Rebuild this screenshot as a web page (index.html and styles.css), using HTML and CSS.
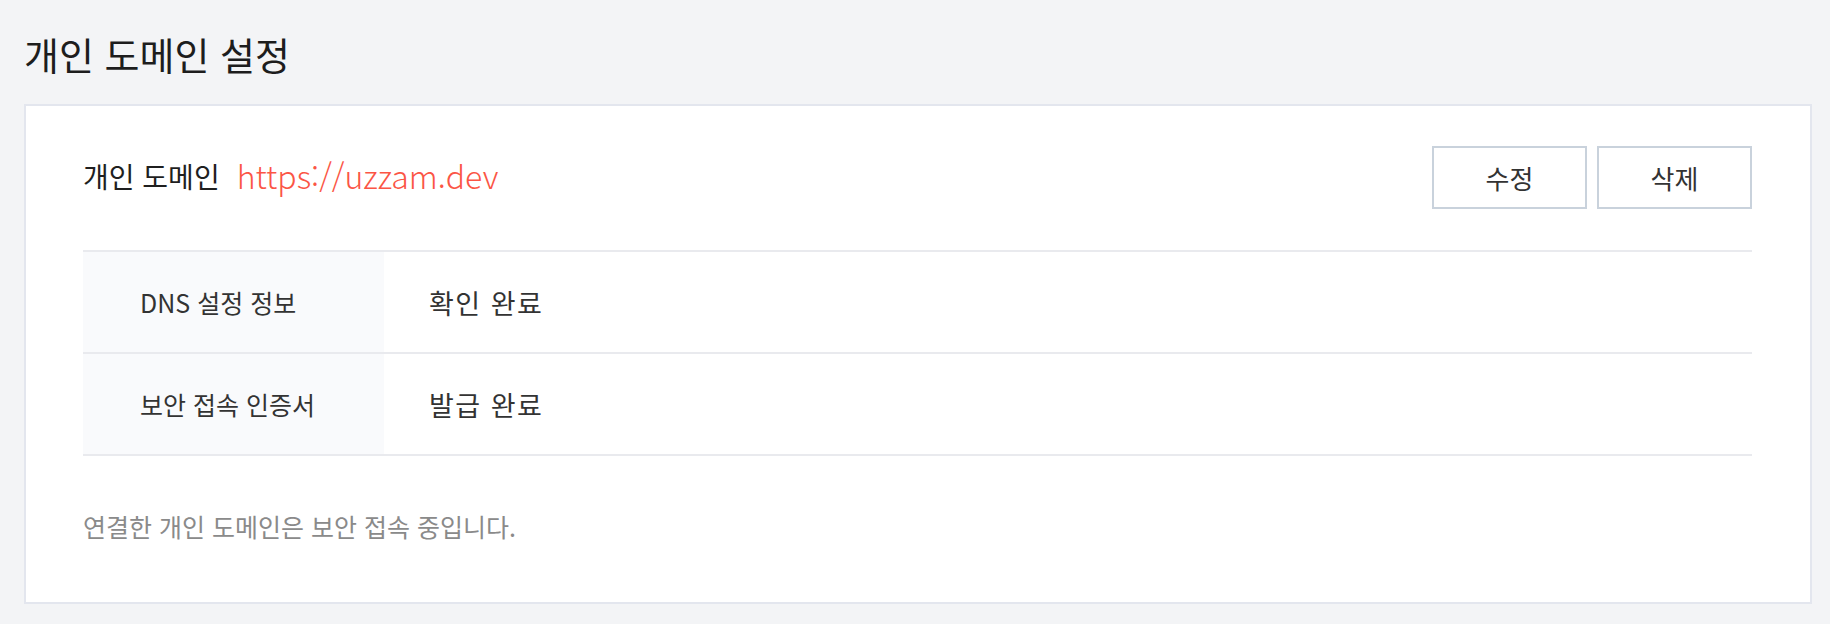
FILE: index.html
```html
<!DOCTYPE html>
<html lang="ko">
<head>
<meta charset="utf-8">
<title>개인 도메인 설정</title>
<link rel="stylesheet" href="styles.css">
</head>
<body>
<main class="page">
  <h1 class="title">개인 도메인 설정</h1>
  <section class="card">
    <div class="domain-row">
      <div class="domain-info">
        <span class="domain-label">개인 도메인</span>
        <a class="domain-url" href="#">https://uzzam.dev</a>
      </div>
      <div class="actions">
        <button class="btn" type="button">수정</button>
        <button class="btn" type="button">삭제</button>
      </div>
    </div>
    <div class="info-table">
      <div class="info-row">
        <div class="info-head">DNS 설정 정보</div>
        <div class="info-value">확인 완료</div>
      </div>
      <div class="info-row">
        <div class="info-head">보안 접속 인증서</div>
        <div class="info-value">발급 완료</div>
      </div>
    </div>
    <p class="notice">연결한 개인 도메인은 보안 접속 중입니다.</p>
  </section>
</main>
</body>
</html>
```

FILE: styles.css
```css
* { box-sizing: border-box; }
html, body { margin: 0; padding: 0; }
body {
  background: #f3f4f6;
  font-family: "Noto Sans CJK KR", "Noto Sans", sans-serif;
  color: #222;
}
.page {
  padding: 0 18px 0 24px;
}
.title {
  margin: 0;
  padding-top: 28px;
  height: 104px;
  font-size: 38px;
  font-weight: 400;
  line-height: 52px;
  color: #1d1d1d;
}
.card {
  background: #fff;
  border: 2px solid #e3e6ee;
  padding: 40px 58px 60px 57px;
}
.domain-row {
  display: flex;
  align-items: center;
  justify-content: space-between;
  height: 63px;
}
.domain-info {
  display: flex;
  align-items: center;
  gap: 17px;
  margin-top: -4px;
}
.domain-label {
  font-size: 28px;
  line-height: 40px;
  color: #1f1f1f;
}
.domain-url {
  font-size: 32px;
  font-weight: 300;
  line-height: 40px;
  color: #fb5545;
  text-decoration: none;
  margin-top: -2px;
}
.actions {
  display: flex;
  gap: 10px;
}
.btn {
  width: 155px;
  height: 63px;
  background: #fff;
  border: 2px solid #c9d2dc;
  font-family: inherit;
  font-size: 26px;
  color: #333;
  padding: 0;
}
.info-table {
  margin-top: 41px;
  border-top: 2px solid #e9eaee;
}
.info-row {
  display: grid;
  grid-template-columns: 301px 1fr;
  height: 102px;
  border-bottom: 2px solid #e9eaee;
}
.info-head {
  background: #f9fafc;
  display: flex;
  align-items: center;
  padding-left: 57px;
  font-size: 25px;
  color: #333;
}
.info-value {
  display: flex;
  align-items: center;
  padding-left: 45px;
  font-size: 27px;
  letter-spacing: 1.5px;
  color: #333;
}
.notice {
  margin: 54px 0 0;
  font-size: 25px;
  color: #8a8a8a;
  line-height: 32px;
}
```
